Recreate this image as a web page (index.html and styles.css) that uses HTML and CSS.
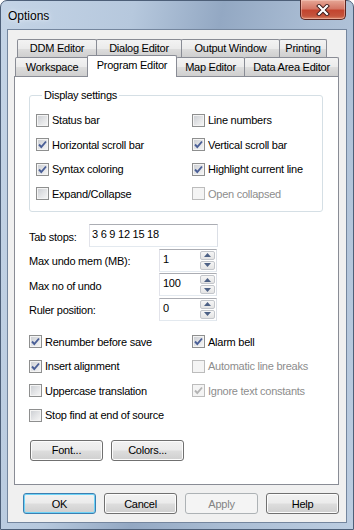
FILE: index.html
```html
<!DOCTYPE html>
<html lang="en">
<head>
    <meta charset="UTF-8">
    <title>Options</title>
    <link rel="stylesheet" href="styles.css">
</head>
<body>
<div class="window">
    <div class="titlebar">
        <span class="title">Options</span>
        <div class="close-btn">
            <svg width="14" height="12" viewBox="0 0 14 12">
                <path d="M3 2 L11 10 M11 2 L3 10" stroke="#3a1a1a" stroke-width="4" stroke-linecap="square"/>
                <path d="M3 2 L11 10 M11 2 L3 10" stroke="#ffffff" stroke-width="2.2" stroke-linecap="square"/>
            </svg>
        </div>
    </div>

    <div class="client">
        <div class="tab-row back">
            <div class="tab w-ddm">DDM Editor</div>
            <div class="tab w-dialog">Dialog Editor</div>
            <div class="tab w-output">Output Window</div>
            <div class="tab w-print">Printing</div>
        </div>
        <div class="tab-row front">
            <div class="tab w-work">Workspace</div>
            <div class="tab selected">Program Editor</div>
            <div class="tab w-map">Map Editor</div>
            <div class="tab w-data">Data Area Editor</div>
        </div>

        <div class="panel">
            <fieldset class="group">
                <legend>Display settings</legend>
                <div class="check-grid">
                    <label class="check"><span class="box"></span>Status bar</label>
                    <label class="check"><span class="box"></span>Line numbers</label>
                    <label class="check"><span class="box on"><svg viewBox="0 0 11 11"><path d="M2 5.5 L4.3 8 L9 2.5"/></svg></span>Horizontal scroll bar</label>
                    <label class="check"><span class="box on"><svg viewBox="0 0 11 11"><path d="M2 5.5 L4.3 8 L9 2.5"/></svg></span>Vertical scroll bar</label>
                    <label class="check"><span class="box on"><svg viewBox="0 0 11 11"><path d="M2 5.5 L4.3 8 L9 2.5"/></svg></span>Syntax coloring</label>
                    <label class="check"><span class="box on"><svg viewBox="0 0 11 11"><path d="M2 5.5 L4.3 8 L9 2.5"/></svg></span>Highlight current line</label>
                    <label class="check"><span class="box"></span>Expand/Collapse</label>
                    <label class="check disabled"><span class="box"></span>Open collapsed</label>
                </div>
            </fieldset>

            <div class="fields">
                <div class="field-row">
                    <span class="lbl lbl-short">Tab stops:</span>
                    <div class="edit edit-wide">3 6 9 12 15 18</div>
                </div>
                <div class="field-row">
                    <span class="lbl lbl-long">Max undo mem (MB):</span>
                    <div class="edit spin-edit">
                        <span class="val">1</span>
                        <div class="spin">
                            <span class="arrow"><svg width="7" height="4" viewBox="0 0 7 4"><path d="M0 4 L3.5 0 L7 4 Z"/></svg></span>
                            <span class="arrow"><svg width="7" height="4" viewBox="0 0 7 4"><path d="M0 0 L3.5 4 L7 0 Z"/></svg></span>
                        </div>
                    </div>
                </div>
                <div class="field-row">
                    <span class="lbl lbl-long">Max no of undo</span>
                    <div class="edit spin-edit">
                        <span class="val">100</span>
                        <div class="spin">
                            <span class="arrow"><svg width="7" height="4" viewBox="0 0 7 4"><path d="M0 4 L3.5 0 L7 4 Z"/></svg></span>
                            <span class="arrow"><svg width="7" height="4" viewBox="0 0 7 4"><path d="M0 0 L3.5 4 L7 0 Z"/></svg></span>
                        </div>
                    </div>
                </div>
                <div class="field-row">
                    <span class="lbl lbl-long">Ruler position:</span>
                    <div class="edit spin-edit">
                        <span class="val">0</span>
                        <div class="spin">
                            <span class="arrow"><svg width="7" height="4" viewBox="0 0 7 4"><path d="M0 4 L3.5 0 L7 4 Z"/></svg></span>
                            <span class="arrow"><svg width="7" height="4" viewBox="0 0 7 4"><path d="M0 0 L3.5 4 L7 0 Z"/></svg></span>
                        </div>
                    </div>
                </div>
            </div>

            <div class="check-grid lower">
                <label class="check"><span class="box on"><svg viewBox="0 0 11 11"><path d="M2 5.5 L4.3 8 L9 2.5"/></svg></span>Renumber before save</label>
                <label class="check"><span class="box on"><svg viewBox="0 0 11 11"><path d="M2 5.5 L4.3 8 L9 2.5"/></svg></span>Alarm bell</label>
                <label class="check"><span class="box on"><svg viewBox="0 0 11 11"><path d="M2 5.5 L4.3 8 L9 2.5"/></svg></span>Insert alignment</label>
                <label class="check disabled"><span class="box"></span>Automatic line breaks</label>
                <label class="check"><span class="box"></span>Uppercase translation</label>
                <label class="check disabled"><span class="box on"><svg viewBox="0 0 11 11"><path d="M2 5.5 L4.3 8 L9 2.5"/></svg></span>Ignore text constants</label>
                <label class="check"><span class="box"></span>Stop find at end of source</label>
            </div>

            <div class="btn-row inner">
                <button class="btn">Font...</button>
                <button class="btn">Colors...</button>
            </div>
        </div>

        <div class="btn-row dialog">
            <button class="btn default">OK</button>
            <button class="btn">Cancel</button>
            <button class="btn" disabled>Apply</button>
            <button class="btn">Help</button>
        </div>
    </div>
</div>
</body>
</html>
```

FILE: styles.css
```css
* {
    box-sizing: border-box;
}

body {
    margin: 0;
    font-family: "Liberation Sans", Arial, sans-serif;
    font-size: 11px;
    letter-spacing: -0.25px;
    color: #000;
}

.window {
    width: 354px;
    height: 530px;
    display: flex;
    flex-direction: column;
    padding: 0 6px 6px 6px;
    border: 1px solid #4d5f78;
    border-radius: 7px 7px 0 0;
    background: linear-gradient(100deg, #c4d4e6 0%, #b6c8dd 30%, #93a8c3 50%, #a9bcd3 70%, #bccde1 100%);
}

.titlebar {
    height: 28px;
    display: flex;
    align-items: flex-start;
}

.title {
    margin: 7px 0 0 1px;
    font-size: 12px;
    letter-spacing: 0;
    line-height: 16px;
    color: #000;
    text-shadow: 0 0 6px #e4edf6, 0 0 3px #e4edf6;
}

.close-btn {
    margin: -1px 1px 0 auto;
    width: 46px;
    height: 20px;
    display: flex;
    align-items: center;
    justify-content: center;
    border: 1px solid #5b2520;
    border-top: none;
    border-radius: 0 0 5px 5px;
    background: linear-gradient(#e6a796 0%, #d47766 45%, #c3452f 55%, #c4553d 85%, #dd8a6c 100%);
    box-shadow: inset 0 0 0 1px rgba(255, 220, 210, 0.4);
}

.client {
    flex: 1;
    border: 1px solid #74869e;
    background: #f0f0f0;
    padding-top: 9px;
}

/* tabs */

.tab-row {
    display: flex;
}

.tab-row.back {
    margin-left: 9px;
}

.tab-row.front {
    margin-left: 7px;
    height: 19px;
    align-items: flex-end;
}

.tab {
    height: 18px;
    line-height: 17px;
    text-align: center;
    border: 1px solid #898c95;
    border-bottom: none;
    border-radius: 2px 2px 0 0;
    background: linear-gradient(#f3f3f3 0%, #ebebeb 50%, #dddddd 52%, #cfcfcf 100%);
    margin-left: -1px;
    white-space: nowrap;
}

.tab:first-child {
    margin-left: 0;
}

.front .tab {
    height: 19px;
    line-height: 18px;
}

.front .tab.selected {
    position: relative;
    z-index: 1;
    width: 90px;
    height: 22px;
    line-height: 18px;
    margin: 0 0 -1px -2px;
    background: #fff;
}

.w-ddm { width: 80px; }
.w-dialog { width: 86px; }
.w-output { width: 99px; }
.w-print { width: 48px; }
.w-work { width: 74px; }
.w-map { width: 69px; margin-left: -1px; }
.w-data { width: 95px; }

.panel {
    margin-left: 6px;
    width: 325px;
    height: 409px;
    border: 1px solid #898c95;
    background: #fff;
}

/* group box */

.group {
    margin: 12px 0 0 14px;
    width: 294px;
    padding: 7px 6px 5px 6px;
    border: 1px solid #d5dfe5;
    border-radius: 3px;
}

.group legend {
    margin-left: 6px;
    padding: 0 2px;
    line-height: 12px;
}

.check-grid {
    display: grid;
    grid-template-columns: 156px 1fr;
    grid-auto-rows: 24.5px;
}

.check-grid.lower {
    margin-top: 9px;
    padding-left: 14px;
    grid-template-columns: 163px 1fr;
}

.check {
    display: flex;
    align-items: center;
    gap: 3px;
    white-space: nowrap;
}

.check.disabled {
    color: #8d8d8d;
}

.box {
    width: 13px;
    height: 13px;
    flex: none;
    border: 1px solid #8e8f8f;
    background: linear-gradient(135deg, #c9ccd1 0%, #e4e5e7 55%, #f7f7f7 100%);
    box-shadow: inset 0 0 0 1px #f4f4f4;
    display: flex;
}

.box svg {
    width: 11px;
    height: 11px;
}

.box path {
    fill: none;
    stroke: #4a5f97;
    stroke-width: 1.9;
}

.disabled .box {
    border-color: #bcbcbc;
    background: #f4f4f4;
    box-shadow: none;
}

.disabled .box path {
    stroke: #b4b4b4;
}

/* edit fields */

.fields {
    margin-top: 12px;
    padding-left: 14px;
    display: flex;
    flex-direction: column;
    gap: 1.5px;
}

.field-row {
    display: flex;
    align-items: center;
    height: 23px;
}

.lbl {
    padding-top: 2px;
}

.lbl-short {
    width: 60px;
}

.lbl-long {
    width: 130px;
}

.edit {
    height: 23px;
    border: 1px solid;
    border-color: #abadb3 #dbdfe6 #e3e9ef #e2e3ea;
    padding: 3px 0 0 2px;
    line-height: 13px;
    background: #fff;
}

.edit-wide {
    width: 129px;
}

.spin-edit {
    width: 58px;
    display: flex;
    padding: 1px 1px 1px 3px;
}

.spin-edit .val {
    flex: 1;
    padding-top: 2px;
}

.spin {
    width: 15px;
    display: flex;
    flex-direction: column;
    gap: 1px;
}

.arrow {
    flex: 1;
    display: flex;
    align-items: center;
    justify-content: center;
    border: 1px solid #c3c6cb;
    border-radius: 2px;
    background: linear-gradient(#f6f6f6, #e4e4e4);
}

.arrow path {
    fill: #4d6185;
}

/* buttons */

.btn-row {
    display: flex;
    gap: 8px;
}

.btn-row.inner {
    margin: 12px 0 0 15px;
}

.btn-row.dialog {
    margin: 8px 0 0 15px;
}

.btn {
    width: 73px;
    height: 21px;
    padding: 0;
    font-family: inherit;
    font-size: 11px;
    letter-spacing: -0.25px;
    color: #000;
    border: 1px solid #707070;
    border-radius: 3px;
    background: linear-gradient(#f2f2f2 0%, #ebebeb 48%, #dddddd 52%, #cfcfcf 100%);
    box-shadow: inset 0 0 0 1px #fcfcfc;
}

.btn.default {
    border-color: #3c7fb1;
    box-shadow: inset 0 0 0 1px #6ed3f7;
}

.btn:disabled {
    color: #838383;
    border-color: #adb2b5;
    background: #f4f4f4;
    box-shadow: none;
}
```
